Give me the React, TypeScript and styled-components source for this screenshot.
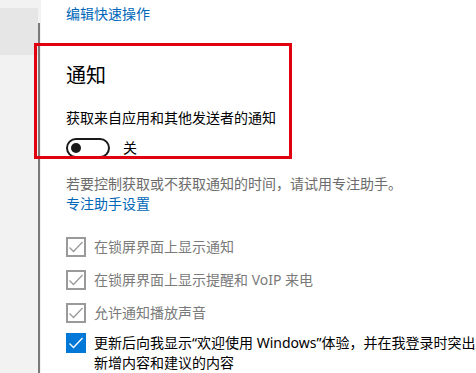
import React from "react";
import styled, { createGlobalStyle } from "styled-components";

const Global = createGlobalStyle`
  html, body { margin: 0; padding: 0; background: #ffffff; }
  body { overflow: hidden; font-family: "Noto Sans", "Noto Sans CJK SC", sans-serif; }
`;

const Page = styled.div`
  position: relative;
  display: flex;
  width: 476px;
  height: 373px;
  overflow: hidden;
  background: #ffffff;
`;

const Sidebar = styled.div`
  display: flex;
  width: 41px;
  flex-shrink: 0;
  background: #f2f2f2;
`;

const SideColumn = styled.div`
  flex: 1;
  padding-top: 8px;
`;

const SideSelected = styled.div`
  height: 47px;
  background: #e6e6e6;
`;

const ScrollLine = styled.div`
  width: 2px;
  margin-top: 23px;
  margin-right: 1px;
  background: #7a7a7a;
`;

const Main = styled.div`
  flex: 1;
  padding: 4px 0 0 25px;
  display: flex;
  flex-direction: column;
  color: #000;
  font-size: 14px;
  line-height: 20px;
  white-space: nowrap;
`;

const Link = styled.div<{ $mt?: number }>`
  color: #0067b8;
  margin-top: ${(p) => p.$mt ?? 0}px;
`;

const Heading = styled.div`
  margin-top: 38px;
  font-size: 20px;
  line-height: 28px;
`;

const Text = styled.div<{ $mt?: number; $muted?: boolean }>`
  margin-top: ${(p) => p.$mt ?? 0}px;
  color: ${(p) => (p.$muted ? "#6b6b6b" : "#000")};
`;

const ToggleRow = styled.div`
  display: flex;
  align-items: center;
  gap: 13px;
  margin-top: 10px;
  height: 20px;
`;

const Toggle = styled.div`
  position: relative;
  box-sizing: border-box;
  width: 44px;
  height: 20px;
  border: 2px solid #1a1a1a;
  border-radius: 10px;
  &::after {
    content: "";
    position: absolute;
    left: 3px;
    top: 3px;
    width: 10px;
    height: 10px;
    border-radius: 50%;
    background: #1a1a1a;
  }
`;

const CheckList = styled.div`
  display: flex;
  flex-direction: column;
  gap: 13px;
  margin-top: 23px;
`;

const CheckRow = styled.div<{ $disabled?: boolean; $mt?: number }>`
  display: flex;
  align-items: flex-start;
  gap: 8px;
  margin-top: ${(p) => p.$mt ?? 0}px;
  color: ${(p) => (p.$disabled ? "#7a7a7a" : "#000")};
`;

const Box = styled.div<{ $disabled?: boolean }>`
  box-sizing: border-box;
  width: 20px;
  height: 20px;
  flex-shrink: 0;
  display: flex;
  align-items: center;
  justify-content: center;
  border: ${(p) => (p.$disabled ? "2px solid #9a9a9a" : "none")};
  background: ${(p) => (p.$disabled ? "#ffffff" : "#0078d7")};
`;

const Annotation = styled.div`
  position: absolute;
  left: 34px;
  top: 43px;
  width: 258px;
  height: 116px;
  box-sizing: border-box;
  border: 3px solid #e0000f;
  pointer-events: none;
`;

const Check = ({ color }: { color: string }) => (
  <svg width="16" height="16" viewBox="0 0 16 16" fill="none">
    <path d="M1.5 8.5 L5.5 12.5 L14.5 3" stroke={color} strokeWidth="1.3" />
  </svg>
);

export default function App() {
  return (
    <Page>
      <Global />
      <Sidebar>
        <SideColumn>
          <SideSelected />
        </SideColumn>
        <ScrollLine />
      </Sidebar>
      <Main>
        <Link>编辑快速操作</Link>
        <Heading>通知</Heading>
        <Text $mt={18}>获取来自应用和其他发送者的通知</Text>
        <ToggleRow>
          <Toggle />
          <span>关</span>
        </ToggleRow>
        <Text $mt={16} $muted>若要控制获取或不获取通知的时间，请试用专注助手。</Text>
        <Link>专注助手设置</Link>
        <CheckList>
          <CheckRow $disabled>
            <Box $disabled><Check color="#9a9a9a" /></Box>
            <span>在锁屏界面上显示通知</span>
          </CheckRow>
          <CheckRow $disabled>
            <Box $disabled><Check color="#9a9a9a" /></Box>
            <span>在锁屏界面上显示提醒和 VoIP 来电</span>
          </CheckRow>
          <CheckRow $disabled>
            <Box $disabled><Check color="#9a9a9a" /></Box>
            <span>允许通知播放声音</span>
          </CheckRow>
          <CheckRow $mt={-3}>
            <Box><Check color="#ffffff" /></Box>
            <span>
              更新后向我显示“欢迎使用 Windows”体验，并在我登录时突出显示
              <br />
              新增内容和建议的内容
            </span>
          </CheckRow>
        </CheckList>
      </Main>
      <Annotation />
    </Page>
  );
}
